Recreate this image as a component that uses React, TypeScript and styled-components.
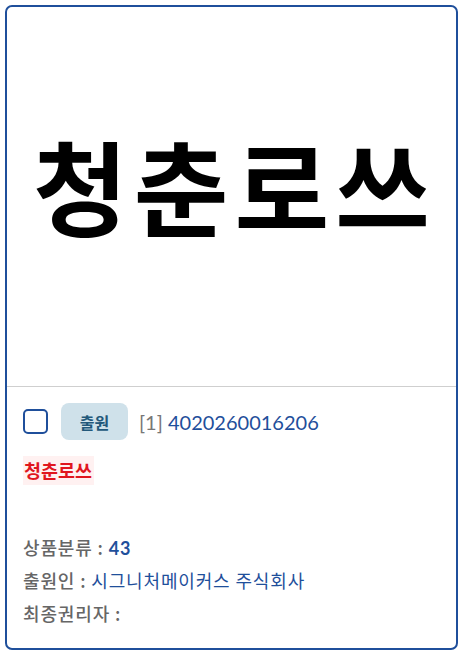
import React from 'react'
import styled, { createGlobalStyle } from 'styled-components'

const GlobalStyle = createGlobalStyle`
  html, body {
    margin: 0;
    padding: 0;
    background: #fff;
  }
  body {
    font-family: 'Lato', 'Noto Sans CJK KR', sans-serif;
  }
`

const Page = styled.div`
  padding: 5px 5px 2px 5px;
`

const Card = styled.div`
  width: 453px;
  height: 645px;
  box-sizing: border-box;
  border: 2px solid #1f4f9b;
  border-radius: 7px;
  display: flex;
  flex-direction: column;
  overflow: hidden;
`

const Thumb = styled.div`
  height: 379px;
  flex-shrink: 0;
  border-bottom: 1px solid #cfcfcf;
  display: flex;
  align-items: center;
  justify-content: center;
`

const BigTitle = styled.span`
  font-family: 'Noto Sans CJK KR', sans-serif;
  font-weight: 700;
  font-size: 103px;
  line-height: 1;
  color: #000;
  letter-spacing: 6px;
  margin: 0 0 24px 6px;
`

const Body = styled.div`
  padding: 16px 16px 0 16px;
  display: flex;
  flex-direction: column;
`

const TopRow = styled.div`
  display: flex;
  align-items: center;
  height: 37px;
`

const Checkbox = styled.span`
  width: 25px;
  height: 25px;
  box-sizing: border-box;
  border: 2px solid #1f4f9b;
  border-radius: 5px;
  margin-right: 13px;
`

const Badge = styled.span`
  width: 67px;
  height: 37px;
  border-radius: 8px;
  background: #cfe1ea;
  color: #22587a;
  font-family: 'Noto Sans CJK KR', sans-serif;
  font-weight: 700;
  font-size: 16px;
  display: flex;
  align-items: center;
  justify-content: center;
  margin-right: 11px;
`

const AppNo = styled.span`
  font-size: 20px;
  color: #1f4f9b;
`

const Bracket = styled.span`
  color: #777;
`

const Mark = styled.span`
  align-self: flex-start;
  margin-top: 16px;
  padding: 2px 2px 2px 1px;
  background: #fff1f1;
  color: #e0161e;
  font-family: 'Noto Sans CJK KR', sans-serif;
  font-weight: 700;
  font-size: 18.5px;
  line-height: 25px;
`

const Details = styled.div`
  margin-top: 50px;
  display: flex;
  flex-direction: column;
  gap: 7px;
`

const Line = styled.div`
  font-size: 18px;
  line-height: 25px;
  letter-spacing: 0.85px;
  color: #666;
`

const Label = styled.span`
  font-family: 'Noto Sans CJK KR', sans-serif;
  font-weight: 500;
`

const Value = styled.span<{ $num?: boolean }>`
  color: #1f4f9b;
  font-weight: ${({ $num }) => ($num ? 700 : 400)};
  font-family: ${({ $num }) => ($num ? "'Lato'" : "'Noto Sans CJK KR'")}, sans-serif;
`

const rows = [
  { label: '상품분류 : ', value: '43', num: true },
  { label: '출원인 : ', value: '시그니처메이커스 주식회사', num: false },
  { label: '최종권리자 : ', value: '', num: false },
]

export default function App() {
  return (
    <Page>
      <GlobalStyle />
      <Card>
        <Thumb>
          <BigTitle>청춘로쓰</BigTitle>
        </Thumb>
        <Body>
          <TopRow>
            <Checkbox />
            <Badge>출원</Badge>
            <AppNo>
              <Bracket>[1]</Bracket> 4020260016206
            </AppNo>
          </TopRow>
          <Mark>청춘로쓰</Mark>
          <Details>
            {rows.map((r) => (
              <Line key={r.label}>
                <Label>{r.label}</Label>
                <Value $num={r.num}>{r.value}</Value>
              </Line>
            ))}
          </Details>
        </Body>
      </Card>
    </Page>
  )
}
